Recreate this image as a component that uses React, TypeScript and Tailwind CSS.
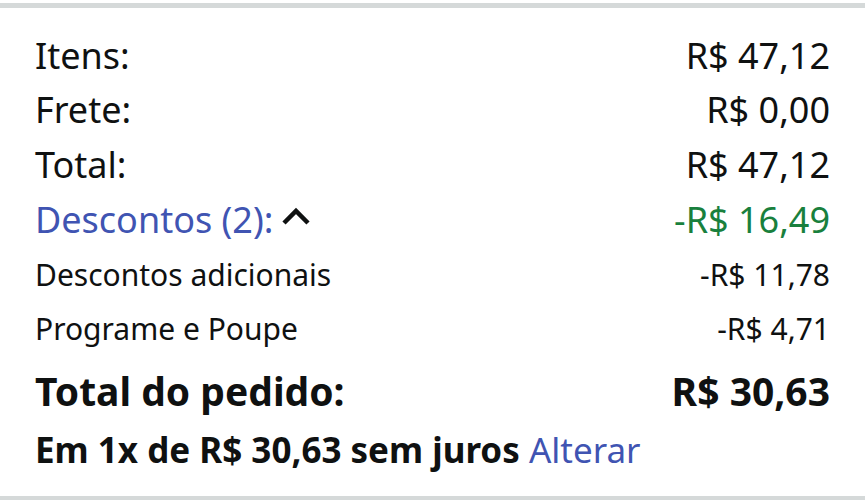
export default function App() {
  return (
    <div className="w-[865px] h-[500px] bg-white font-['Noto_Sans',sans-serif] text-[#0f1111] flex flex-col">
      <div className="h-[3px] bg-white" />
      <div className="h-[5px] bg-[#d5d9d9]" />
      <div className="flex-1 flex flex-col px-[35px] pt-[21px]">
        <div className="flex justify-between h-[54px] text-[36px] leading-[54px]">
          <span>Itens:</span>
          <span>R$ 47,12</span>
        </div>
        <div className="flex justify-between h-[54px] text-[36px] leading-[54px]">
          <span>Frete:</span>
          <span>R$ 0,00</span>
        </div>
        <div className="flex justify-between h-[55px] text-[36px] leading-[55px]">
          <span>Total:</span>
          <span>R$ 47,12</span>
        </div>
        <div className="flex justify-between h-[56px] text-[36px] leading-[56px]">
          <span className="flex items-center gap-[8px] text-[#4054b2]">
            Descontos (2):
            <svg width="30" height="20" viewBox="0 0 30 20" className="mt-[-8px]">
              <path d="M3 17 L15 5 L27 17" fill="none" stroke="#0f1111" strokeWidth="4.5" />
            </svg>
          </span>
          <span className="text-[#19803d]">-R$ 16,49</span>
        </div>
        <div className="flex justify-between h-[54px] text-[30px] leading-[54px]">
          <span>Descontos adicionais</span>
          <span>-R$ 11,78</span>
        </div>
        <div className="flex justify-between h-[53px] text-[30px] leading-[53px]">
          <span>Programe e Poupe</span>
          <span>-R$ 4,71</span>
        </div>
        <div className="flex justify-between h-[64px] text-[39px] leading-[64px] font-bold mt-[4px]">
          <span>Total do pedido:</span>
          <span>R$ 30,63</span>
        </div>
        <div className="text-[35px] leading-[52px] font-bold whitespace-nowrap mt-[1px]">
          Em 1x de R$ 30,63 sem juros <span className="font-normal text-[#4054b2]">Alterar</span>
        </div>
      </div>
      <div className="h-[4px] bg-[#d5d9d9]" />
    </div>
  );
}
